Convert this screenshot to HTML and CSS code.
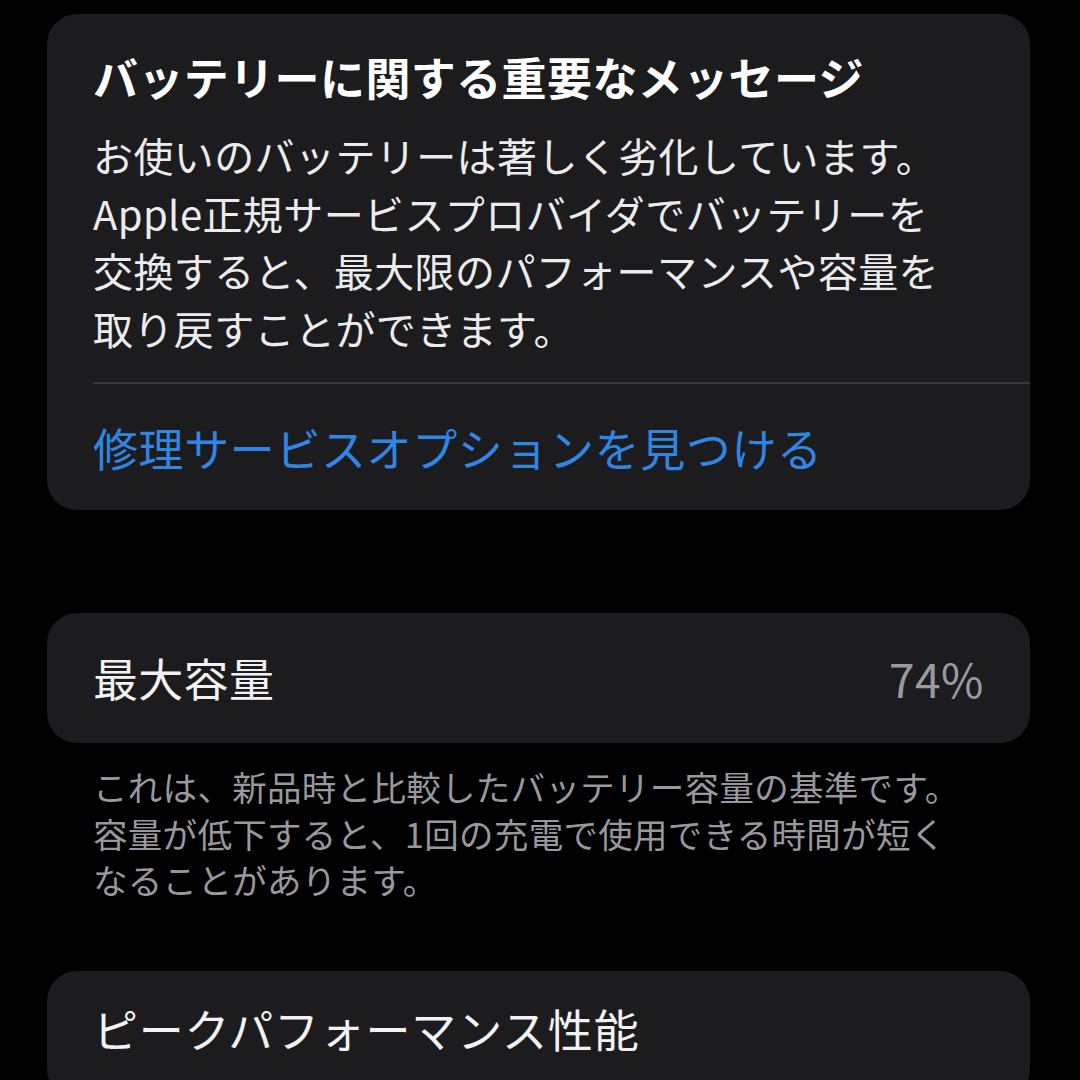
FILE: index.html
```html
<!DOCTYPE html>
<html lang="ja">
<head>
<meta charset="utf-8">
<link rel="stylesheet" href="styles.css">
</head>
<body>
<main class="page">
  <section class="card card-message">
    <div class="message-body">
      <h1 class="title">バッテリーに関する重要なメッセージ</h1>
      <p class="desc">お使いのバッテリーは著しく劣化しています。<br>Apple正規サービスプロバイダでバッテリーを<br>交換すると、最大限のパフォーマンスや容量を<br>取り戻すことができます。</p>
    </div>
    <div class="divider"></div>
    <div class="link">修理サービスオプションを見つける</div>
  </section>

  <section class="card card-row">
    <span class="row-label">最大容量</span>
    <span class="row-value">74%</span>
  </section>
  <p class="footnote">これは、新品時と比較したバッテリー容量の基準です。<br>容量が低下すると、1回の充電で使用できる時間が短く<br>なることがあります。</p>

  <section class="card card-peak">
    <span class="row-label peak-label">ピークパフォーマンス性能</span>
  </section>
</main>
</body>
</html>
```

FILE: styles.css
```css
html, body {
  margin: 0;
  padding: 0;
  background: #000;
  height: 1080px;
  overflow: hidden;
}
body {
  font-family: "Noto Sans CJK JP", "Noto Sans", sans-serif;
  color: #f2f2f4;
}
.page {
  display: flex;
  flex-direction: column;
  padding: 14px 50px 0 47px;
}
.card {
  background: #1c1c1e;
  border-radius: 30px;
}
.card-message {
  display: flex;
  flex-direction: column;
}
.message-body {
  padding: 34px 40px 0 46px;
}
.title {
  margin: 0;
  font-size: 45px;
  line-height: 58px;
  font-weight: 700;
  letter-spacing: 0.4px;
  color: #fff;
}
.desc {
  margin: 21px 0 0;
  font-size: 40px;
  line-height: 57.5px;
  font-weight: 400;
  letter-spacing: 0.4px;
  color: #ececee;
}
.divider {
  height: 2px;
  background: #3a3a3c;
  margin: 25px 0 0 46px;
}
.link {
  padding: 34px 40px 32px 46px;
  font-size: 45px;
  line-height: 60px;
  letter-spacing: 0.6px;
  color: #2f86e4;
}
.card-row {
  margin-top: 103px;
  display: flex;
  justify-content: space-between;
  align-items: center;
  padding: 35px 46px 35px 46px;
}
.row-label {
  font-size: 45px;
  line-height: 60px;
  letter-spacing: 0.3px;
  color: #f2f2f4;
}
.row-value {
  font-size: 46px;
  line-height: 60px;
  letter-spacing: 0.5px;
  color: #9a9aa0;
}
.footnote {
  margin: 20px 0 0 46px;
  font-size: 34.5px;
  line-height: 46.5px;
  letter-spacing: 0.3px;
  color: #98989e;
}
.card-peak {
  margin-top: 68px;
  padding: 28px 46px 40px 46px;
  display: flex;
}
.peak-label {
  letter-spacing: 0.8px;
}
```
